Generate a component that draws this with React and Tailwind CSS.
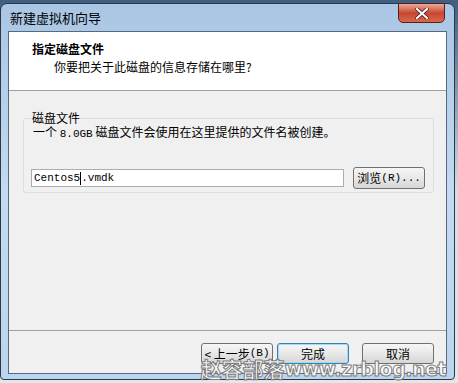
import React from 'react'

const cjk = { fontFamily: '"Noto Sans CJK SC", "Noto Sans", sans-serif' }
const mono = { fontFamily: '"Liberation Mono", "Noto Sans CJK SC", monospace' }

// Win7 style push button
const Btn = ({ children, focused, className = '' }) => (
  <div
    className={`flex items-center justify-center h-[21px] rounded-[3px] border text-[12px] text-black bg-gradient-to-b from-[#f6f6f6] via-[#e8e8e8] to-[#d6d6d6] ${
      focused ? 'border-[#3c7fb1] shadow-[inset_0_0_0_1px_#9fdcf5]' : 'border-[#707070]'
    } ${className}`}
    style={cjk}
  >
    {children}
  </div>
)

export default function App() {
  return (
    <div className="w-[458px] h-[383px] bg-gradient-to-b from-[#3f5f82] via-[#d8dde3] to-[#e4e6e8] overflow-hidden relative">
      {/* window frame */}
      <div className="mt-[3px] w-[455px] h-[377px] rounded-t-[7px] rounded-b-[4px] border border-[#2a3848] bg-gradient-to-b from-[#a9c6e4] via-[#c3daf0] to-[#bcd5ee] flex flex-col relative">
        {/* title bar */}
        <div className="h-[27px] flex items-center pl-[9px] text-[13px] text-black" style={cjk}>
          新建虚拟机向导
        </div>
        {/* close button */}
        <div className="absolute right-[9px] -top-[1px] w-[47px] h-[20px] rounded-b-[5px] border border-[#5a2018] bg-gradient-to-b from-[#e9a99a] via-[#c8452f] to-[#d8684e] flex items-center justify-center">
          <svg width="14" height="11" viewBox="0 0 14 11">
            <path d="M2 1 L12 10 M12 1 L2 10" stroke="#3a1510" strokeWidth="3.6" strokeLinecap="square" />
            <path d="M2 1 L12 10 M12 1 L2 10" stroke="#ffffff" strokeWidth="2.2" strokeLinecap="square" />
          </svg>
        </div>

        {/* client area */}
        <div className="mx-[7px] mb-[5px] flex-1 border border-[#55697f] bg-[#f0f0f0] flex flex-col">
          {/* header */}
          <div className="h-[59px] bg-white border-b border-[#a0a0a0] pt-[9px]" style={cjk}>
            <div className="pl-[23px] text-[12px] font-bold leading-[16px] text-black">指定磁盘文件</div>
            <div className="pl-[45px] text-[12px] leading-[16px] mt-[2px] text-black">你要把关于此磁盘的信息存储在哪里?</div>
          </div>

          {/* body */}
          <div className="flex-1 pt-[20px] pl-[14px] pr-[12px]">
            <div className="relative pt-[7px]">
              <div className="absolute left-[9px] top-0 text-[12px] leading-[14px] bg-[#f0f0f0]" style={cjk}>
                磁盘文件
              </div>
              <div className="h-[75px] border border-[#d5dfe5] rounded-[3px] pt-[6px] pl-[9px] pr-[8px]">
                <div className="text-[12px] leading-[14px] text-black whitespace-pre" style={cjk}>
                  一个 <span style={mono} className="text-[11px]">8.0GB</span> 磁盘文件会使用在这里提供的文件名被创建。
                </div>
                <div className="flex items-center mt-[26px] gap-[9px] -ml-[2px]">
                  <div className="w-[314px] h-[18px] bg-white border border-[#abadb3] flex items-center pl-[2px] text-[11px] text-black" style={mono}>
                    Centos5<span className="w-px h-[13px] bg-black"></span>.vmdk
                  </div>
                  <Btn className="w-[72px] h-[22px]">
                    浏览<span style={mono} className="text-[11px]">(R)...</span>
                  </Btn>
                </div>
              </div>
            </div>
          </div>

          {/* separator */}
          <div className="h-px bg-[#a0a0a0]"></div>

          {/* button row */}
          <div className="h-[42px] flex items-start justify-end pt-[12px] pr-[12px]">
            <Btn className="w-[72px]">
              &lt; 上一步<span style={mono} className="text-[11px]">(B)</span>
            </Btn>
            <Btn focused className="w-[72px] ml-[4px]">完成</Btn>
            <Btn className="w-[72px] ml-[13px]">取消</Btn>
          </div>
        </div>

        {/* watermark */}
        <div
          className="absolute right-[8px] bottom-[-1px] flex items-end font-bold text-white/85 pointer-events-none whitespace-nowrap"
          style={{ WebkitTextStroke: '1px #7d7d7d' }}
        >
          <span className="text-[21px] leading-[24px]" style={cjk}>赵容部落</span>
          <span className="text-[19px] leading-[22px] tracking-[-0.5px]" style={{ fontFamily: '"DejaVu Sans", sans-serif' }}>
            www.zrblog.net
          </span>
        </div>
      </div>
    </div>
  )
}
